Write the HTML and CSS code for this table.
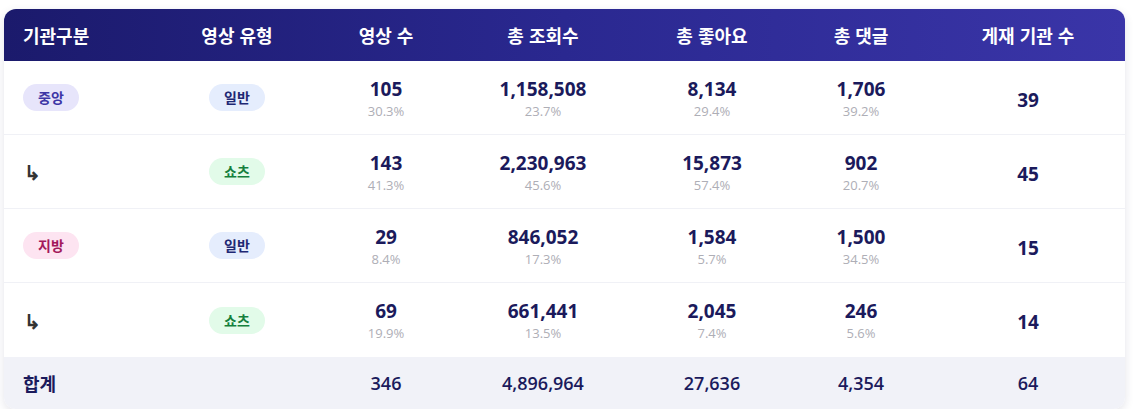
FILE: index.html
```html
<!DOCTYPE html>
<html lang="ko">
<head>
<meta charset="utf-8">
<link rel="stylesheet" href="styles.css">
</head>
<body>
<div class="card">
  <div class="row head">
    <div class="c first">기관구분</div>
    <div class="c">영상 유형</div>
    <div class="c">영상 수</div>
    <div class="c">총 조회수</div>
    <div class="c">총 좋아요</div>
    <div class="c">총 댓글</div>
    <div class="c">게재 기관 수</div>
  </div>
  <div class="row body">
    <div class="c first"><span class="badge b-center">중앙</span></div>
    <div class="c"><span class="badge b-normal">일반</span></div>
    <div class="c"><div class="num">105</div><div class="pct">30.3%</div></div>
    <div class="c"><div class="num">1,158,508</div><div class="pct">23.7%</div></div>
    <div class="c"><div class="num">8,134</div><div class="pct">29.4%</div></div>
    <div class="c"><div class="num">1,706</div><div class="pct">39.2%</div></div>
    <div class="c"><div class="num">39</div></div>
  </div>
  <div class="row body">
    <div class="c first"><span class="sub">↳</span></div>
    <div class="c"><span class="badge b-shorts">쇼츠</span></div>
    <div class="c"><div class="num">143</div><div class="pct">41.3%</div></div>
    <div class="c"><div class="num">2,230,963</div><div class="pct">45.6%</div></div>
    <div class="c"><div class="num">15,873</div><div class="pct">57.4%</div></div>
    <div class="c"><div class="num">902</div><div class="pct">20.7%</div></div>
    <div class="c"><div class="num">45</div></div>
  </div>
  <div class="row body">
    <div class="c first"><span class="badge b-local">지방</span></div>
    <div class="c"><span class="badge b-normal">일반</span></div>
    <div class="c"><div class="num">29</div><div class="pct">8.4%</div></div>
    <div class="c"><div class="num">846,052</div><div class="pct">17.3%</div></div>
    <div class="c"><div class="num">1,584</div><div class="pct">5.7%</div></div>
    <div class="c"><div class="num">1,500</div><div class="pct">34.5%</div></div>
    <div class="c"><div class="num">15</div></div>
  </div>
  <div class="row body">
    <div class="c first"><span class="sub">↳</span></div>
    <div class="c"><span class="badge b-shorts">쇼츠</span></div>
    <div class="c"><div class="num">69</div><div class="pct">19.9%</div></div>
    <div class="c"><div class="num">661,441</div><div class="pct">13.5%</div></div>
    <div class="c"><div class="num">2,045</div><div class="pct">7.4%</div></div>
    <div class="c"><div class="num">246</div><div class="pct">5.6%</div></div>
    <div class="c"><div class="num">14</div></div>
  </div>
  <div class="row total">
    <div class="c first">합계</div>
    <div class="c"></div>
    <div class="c">346</div>
    <div class="c">4,896,964</div>
    <div class="c">27,636</div>
    <div class="c">4,354</div>
    <div class="c">64</div>
  </div>
</div>
</body>
</html>
```

FILE: styles.css
```css
* { box-sizing: border-box; }
html, body { margin: 0; background: #fff; }
body {
  padding: 9px 8px 0 4px;
  font-family: "Noto Sans CJK KR", "Noto Sans", sans-serif;
  color: #1b1a5c;
}
.card {
  width: 1121px;
  border-radius: 12px;
  overflow: hidden;
  background: #fff;
  box-shadow: 0 3px 10px rgba(30, 30, 80, 0.12);
}
.row {
  display: grid;
  grid-template-columns: 151px 164px 134px 180px 158px 140px 194px;
  align-items: center;
}
.c {
  text-align: center;
  display: flex;
  flex-direction: column;
  align-items: center;
  justify-content: center;
}
.c.first {
  align-items: flex-start;
  padding-left: 19px;
}
.head {
  height: 52px;
  background: linear-gradient(90deg, #1b1a6c 0%, #2a2890 50%, #3a35a8 100%);
  color: #fff;
  font-size: 18px;
  font-weight: 700;
}
.body {
  height: 74px;
  border-bottom: 1px solid #f0f1f6;
}
.body:nth-child(5) { border-bottom: none; }
.num {
  font-family: "Open Sans", "Noto Sans", sans-serif;
  font-size: 19px;
  font-weight: 700;
  line-height: 24px;
  color: #1b1a5c;
  margin-top: 2px;
}
.pct {
  font-family: "Open Sans", "Noto Sans", sans-serif;
  font-size: 13px;
  line-height: 20px;
  color: #aeaeb6;
}
.body .c:last-child .num { margin-top: 4px; }
.badge {
  display: inline-block;
  height: 27px;
  line-height: 27px;
  padding: 0 15px;
  border-radius: 14px;
  font-size: 14px;
  font-weight: 700;
}
.b-center { background: #e7e5fb; color: #3d36a6; }
.b-normal { background: #e5edfd; color: #1f2874; }
.b-shorts { background: #e2fbe9; color: #15803d; }
.b-local { background: #fde4f1; color: #a3195b; }
.sub {
  font-family: "Noto Sans CJK KR", sans-serif;
  font-size: 20px;
  font-weight: 700;
  color: #333;
  margin-left: 1px;
}
.total {
  height: 52px;
  background: #f1f2f8;
  font-family: "Open Sans", "Noto Sans", sans-serif;
  font-size: 18px;
  font-weight: 600;
  color: #1b1a5c;
}
.total .first {
  font-family: "Noto Sans CJK KR", sans-serif;
  font-weight: 700;
  font-size: 18px;
}
```
